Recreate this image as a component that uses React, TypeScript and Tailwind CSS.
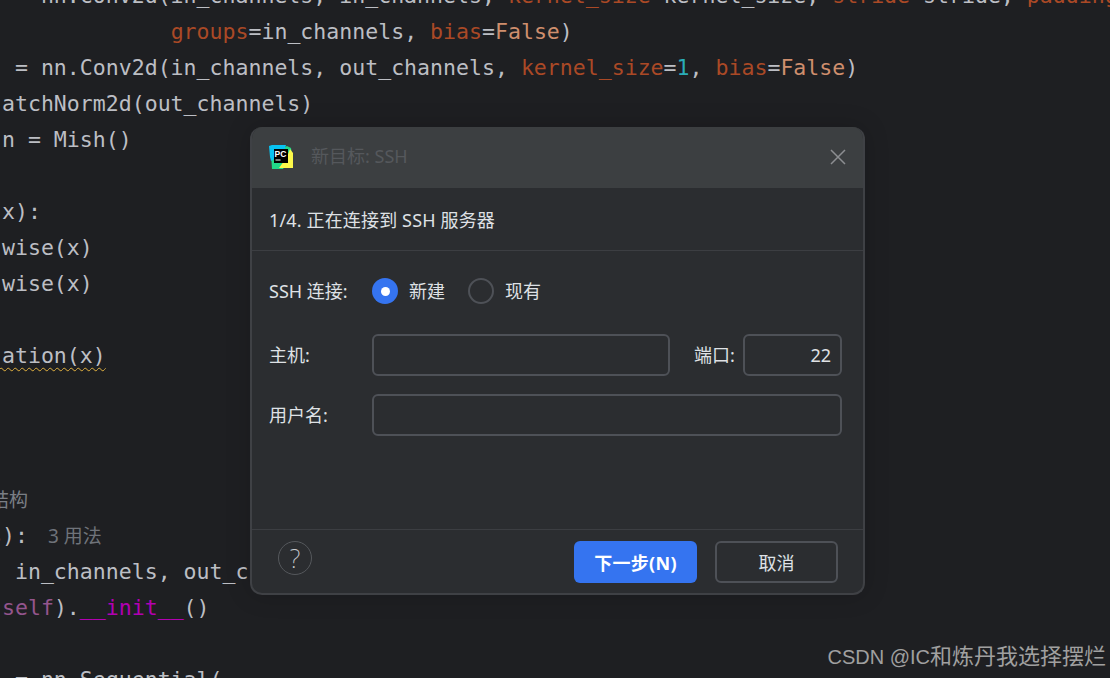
import React from 'react';

const ui = "font-['Noto_Sans','Noto_Sans_CJK_SC',sans-serif]";

// token helpers for the editor behind the dialog
const Arg = ({ children }: { children: React.ReactNode }) => <span className="text-[#aa4926]">{children}</span>;
const Kw = ({ children }: { children: React.ReactNode }) => <span className="text-[#cf8e6d]">{children}</span>;

const CodeLine = ({ children }: { children?: React.ReactNode }) => (
  <div className="h-9 whitespace-pre leading-9">{children}</div>
);

const Editor = () => (
  <div className="-mt-[22px] -ml-[11px] font-['DejaVu_Sans_Mono','Noto_Sans_CJK_SC',monospace] text-[21.55px] text-[#bcbec4]">
    <CodeLine>
      {'    nn.Conv2d(in_channels, in_channels, '}
      <Arg>kernel_size</Arg>=kernel_size, <Arg>stride</Arg>=stride, <Arg>padding</Arg>=padding,
    </CodeLine>
    <CodeLine>
      {'              '}
      <Arg>groups</Arg>=in_channels, <Arg>bias</Arg>=<Kw>False</Kw>)
    </CodeLine>
    <CodeLine>
      {'  = nn.Conv2d(in_channels, out_channels, '}
      <Arg>kernel_size</Arg>=<span className="text-[#2aacb8]">1</span>, <Arg>bias</Arg>=<Kw>False</Kw>)
    </CodeLine>
    <CodeLine>{' atchNorm2d(out_channels)'}</CodeLine>
    <CodeLine>{' n = Mish()'}</CodeLine>
    <CodeLine />
    <CodeLine>{' x):'}</CodeLine>
    <CodeLine>{' wise(x)'}</CodeLine>
    <CodeLine>{' wise(x)'}</CodeLine>
    <CodeLine />
    <CodeLine>
      <span className="underline decoration-wavy decoration-[#e0b040] decoration-1 underline-offset-4">{' ation(x)'}</span>
    </CodeLine>
    <CodeLine />
    <CodeLine />
    <CodeLine />
    <CodeLine>
      <span className="pl-[1px] text-[19px] text-[#7a7e85]">结构</span>
    </CodeLine>
    <CodeLine>
      <Arg>s</Arg>):{' '}
      <span className={`ml-[7px] text-[19px] text-[#6f737a] ${ui}`}>3 用法</span>
    </CodeLine>
    <CodeLine>{'  in_channels, out_channels, kernel_size=3):'}</CodeLine>
    <CodeLine>
      {' '}
      <span className="text-[#94558d]">self</span>).<span className="text-[#b200b2]">__init__</span>()
    </CodeLine>
    <CodeLine />
    <CodeLine>{'  = nn.Sequential('}</CodeLine>
  </div>
);

const PyCharmLogo = () => (
  <svg width="24" height="24" viewBox="0 0 24 24" className="shrink-0">
    <path d="M3 24 L2 8 L18 1 L22 3 L23 10 L14 24 Z" fill="#21d789" />
    <path d="M0 1 L3 0 L17 0 L14 9 L2 16 L1 12 Z" fill="#08c3f2" />
    <path d="M10 23 L18 12 L21 4 L24 8 L24 23 Z" fill="#fcf84a" />
    <rect x="5" y="4" width="14" height="14" fill="#000" />
    <text x="5.6" y="11.5" fontSize="8.5" fontWeight="700" fill="#fff" fontFamily="'Liberation Sans', sans-serif">
      PC
    </text>
    <rect x="6.5" y="14.5" width="5" height="1" fill="#fff" />
  </svg>
);

const Field = ({ className, children }: { className: string; children?: React.ReactNode }) => (
  <div className={`flex h-[42px] items-center justify-end rounded-md border-2 border-[#4e5157] pr-[9px] ${className}`}>
    {children}
  </div>
);

const Dialog = () => (
  <div
    className={`absolute left-[250px] top-[127px] flex h-[468px] w-[615px] flex-col overflow-hidden rounded-[12px] border-2 border-t-0 border-[#3f4145] bg-[#2b2d30] text-[18px] text-[#dfe1e5] shadow-[0_0_24px_rgba(0,0,0,0.18)] ${ui}`}
  >
    <div className="-mx-[2px] flex h-[61px] shrink-0 items-center bg-[#3c3f41] pb-[1px] pl-[19px] pr-[18px]">
      <PyCharmLogo />
      <span className="ml-[18px] pb-[1px] text-[#55585c]">新目标: SSH</span>
      <svg width="18" height="18" viewBox="0 0 18 18" className="ml-auto" fill="none" stroke="#8c8e91" strokeWidth="1.5">
        <path d="M2 2 L16 16 M16 2 L2 16" />
      </svg>
    </div>

    <div className="flex h-[63px] shrink-0 items-center border-b border-[#3c3e42] pl-[17px] pt-[2px] tracking-[0.15px]">
      1/4. 正在连接到 SSH 服务器
    </div>

    <div className="flex-1 pl-[17px] pr-[21px] pt-[27px]">
      <div className="flex h-[26px] items-center">
        <span className="w-[103px]">SSH 连接:</span>
        <span className="flex size-[26px] items-center justify-center rounded-full bg-[#3574f0]">
          <span className="size-[9px] rounded-full bg-white" />
        </span>
        <span className="ml-[11px] w-[59px]">新建</span>
        <span className="size-[26px] rounded-full border-2 border-[#4e5157]" />
        <span className="ml-[11px]">现有</span>
      </div>
      <div className="mt-[30px] flex items-center">
        <span className="w-[103px]">主机:</span>
        <Field className="w-[298px]" />
        <span className="ml-[24px] w-[49px]">端口:</span>
        <Field className="w-[99px]">22</Field>
      </div>
      <div className="mt-[18px] flex items-center">
        <span className="w-[103px]">用户名:</span>
        <Field className="w-[470px]" />
      </div>
    </div>

    <div className="flex h-[64px] shrink-0 items-start border-t border-[#3c3e42] pl-[26px] pr-[25px] pt-[11px]">
      <span className="flex h-[34px] w-[34px] items-center justify-center rounded-full border-[1.5px] border-[#55585c] text-[26px] font-extralight leading-none text-[#c8cacf]">
        ?
      </span>
      <span className="ml-auto flex h-[42px] w-[123px] items-center justify-center rounded-md bg-[#3574f0] pt-[2px] font-bold tracking-[0.3px] text-white">
        下一步(N)
      </span>
      <span className="ml-[18px] flex h-[42px] w-[123px] items-center justify-center rounded-md border-2 border-[#4e5157] pt-[2px]">
        取消
      </span>
    </div>
  </div>
);

export default function App() {
  return (
    <div className="relative h-[678px] w-[1110px] overflow-hidden bg-[#1e1f22]">
      <Editor />
      <Dialog />
      <div className="absolute bottom-[6px] right-[4px] font-['Liberation_Sans','Noto_Sans_CJK_SC',sans-serif] text-[22px] leading-[30px] text-[#a0a0a0]">
        <span className="text-[20px]">CSDN @IC</span>和炼丹我选择摆烂
      </div>
    </div>
  );
}
